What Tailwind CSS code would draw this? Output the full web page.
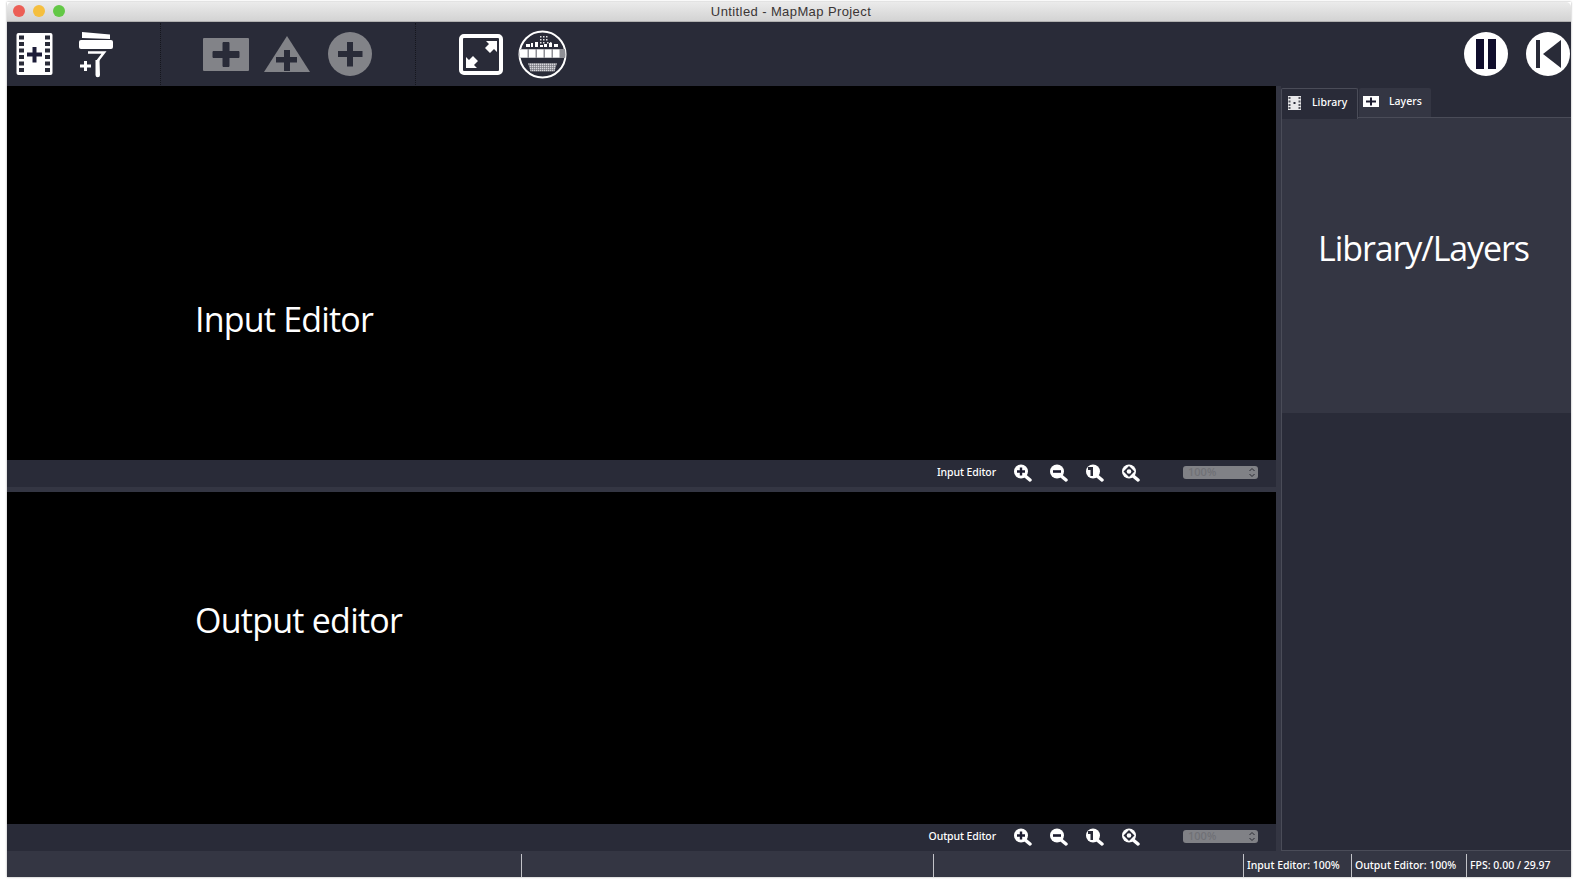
<!DOCTYPE html>
<html lang="en">
<head>
  <meta charset="UTF-8"/>
  <title>Untitled - MapMap Project</title>
  <script src="https://cdn.jsdelivr.net/npm/@tailwindcss/browser@4"></script>
</head>
<body class="bg-white font-['Noto_Sans',sans-serif] overflow-hidden">
<div class="w-[1573px] h-[883px] pl-[7px] pr-[2px] pt-[2px] pb-[6px]">
  <div class="flex flex-col h-full shadow-[0_0_2px_rgba(0,0,0,0.35)]">

    <!-- title bar -->
    <div class="relative h-[20px] shrink-0 flex items-center justify-center rounded-t-[5px] bg-gradient-to-b from-[#ebebeb] to-[#d3d3d3] border-b border-[#b0b0b0]">
      <div class="absolute left-[6px] top-[3px] flex gap-[8px]">
        <span class="w-3 h-3 rounded-full bg-[#ec5f56]"></span>
        <span class="w-3 h-3 rounded-full bg-[#f5bf3f]"></span>
        <span class="w-3 h-3 rounded-full bg-[#63c846]"></span>
      </div>
      <span class="text-[13px] leading-none text-[#3a3535] font-['Liberation_Sans',sans-serif] tracking-[0.4px] ml-[4px]">Untitled - MapMap Project</span>
    </div>

    <!-- toolbar -->
    <div class="h-[64px] shrink-0 bg-[#292b38] flex items-center relative">
      <svg class="ml-[9px] w-[37px] h-[44px]" viewBox="0 0 37 44">
        <rect x="0.5" y="1" width="36" height="42" rx="2" fill="#fff"/>
        <g fill="#292b38">
          <rect x="3" y="3.5" width="5" height="4"/><rect x="3" y="10" width="5" height="4"/><rect x="3" y="16.5" width="5" height="4"/><rect x="3" y="23" width="5" height="4"/><rect x="3" y="29.5" width="5" height="4"/><rect x="3" y="36" width="5" height="4"/>
          <rect x="29" y="3.5" width="5" height="4"/><rect x="29" y="10" width="5" height="4"/><rect x="29" y="16.5" width="5" height="4"/><rect x="29" y="23" width="5" height="4"/><rect x="29" y="29.5" width="5" height="4"/><rect x="29" y="36" width="5" height="4"/>
        </g>
        <path d="M16.500 15h4v5.500H26v4h-5.500v6h-4v-6H11v-4h5.500z" fill="#1c1c38"/>
      </svg>
      <!-- paint roller with plus -->
      <svg class="ml-[25px] w-[36px] h-[48px]" viewBox="0 0 36 48">
        <path d="M4 2l28 2.500V9L4 8z" fill="#fff"/>
        <rect x="1" y="10" width="34" height="9" rx="2" fill="#fff"/>
        <path d="M10 22.500h16L19.500 31" fill="none" stroke="#fff" stroke-width="2.500"/>
        <path d="M17.500 30h4l.5 15a2 2 0 0 1-4.500 0z" fill="#fff"/>
        <path d="M6 31h3v3.500h4v3H9V41H6v-3.500H2v-3h4z" fill="#fff"/>
      </svg>
      <div class="ml-[46px] w-px h-[62px] border-l border-dotted border-[#15161d]"></div>
      <svg class="ml-[42px] w-[46px] h-[33px]" viewBox="0 0 46 33">
        <rect width="46" height="33" rx="1" fill="#828388"/>
        <path d="M20 4.500h6v9h10v6H26v9h-6v-9H10v-6h10z" fill="#292b38" stroke="#292b38" stroke-linejoin="round"/>
      </svg>
      <svg class="ml-[15px] w-[46px] h-[36px]" viewBox="0 0 46 36">
        <path d="M23 0L46 36H0z" fill="#828388"/>
        <path d="M20 14h6v7h7v5.500h-7V35h-6v-8.500h-8V21h8z" fill="#292b38"/>
      </svg>
      <svg class="ml-[18px] w-[44px] h-[44px]" viewBox="0 0 44 44">
        <circle cx="22" cy="22" r="22" fill="#828388"/>
        <path d="M19 10h6v9h9.500v6H25v9.500h-6V25H10v-6h9z" fill="#292b38"/>
      </svg>
      <div class="ml-[43px] w-px h-[62px] border-l border-dotted border-[#15161d]"></div>
      <svg class="ml-[43px] w-[44px] h-[41px]" viewBox="0 0 44 41">
        <rect x="2" y="2" width="40" height="37" rx="3" fill="none" stroke="#fff" stroke-width="4"/>
        <path d="M27 7h11v11l-3-3-4 4-5-5 4-4z" fill="#fff"/>
        <path d="M7 34V23l3 3 4-4 5 5-4 4 3 3z" fill="#fff"/>
      </svg>
      <!-- keyboard circle -->
      <svg class="ml-[15px] w-[49px] h-[49px]" viewBox="0 0 49 49">
        <defs>
          <clipPath id="kb"><circle cx="24.500" cy="24.500" r="23"/></clipPath>
          <pattern id="hatch" width="2" height="2" patternUnits="userSpaceOnUse"><rect width="2" height="2" fill="#6d6e76"/><rect width="1.400" height="1.400" fill="#d8d8dc"/></pattern>
        </defs>
        <circle cx="24.500" cy="24.500" r="23" fill="#292b38" stroke="#fff" stroke-width="2"/>
        <g clip-path="url(#kb)" fill="#fff">
          <path d="M22 6h1.500v1.500H22zM25 6h1.500v1.500H25zM28 6h1.500v1.500H28zM22 9h1.500v1.500H22zM25 9h1.500v1.500H25zM28 9h1.500v1.500H28zM22 12h1.500v1.500H22zM25 12h1.500v1.500H25zM29 12h1.500v1.500H29zM32 12h1.500v1.500H32z" opacity=".85"/>
          <path d="M8 14h4v3H8zM13 13h2v4h-2zM17 12h3v5h-3zM22 15h3v2h-3zM26 14h3v3h-3zM31 13h3v4h-3zM36 14h4v3h-4z"/>
          <rect x="0" y="19" width="49" height="9" fill="#8f9096"/>
          <path d="M2 19.500h7.500v8H2zM11 19.500h6.500v8H11zM19 19.500h6.500v8H19zM27 19.500h6.500v8H27zM35 19.500h6.500v8H35z"/>
          <path d="M10 33h29l-2.500 8.500h-24z" fill="url(#hatch)"/>
        </g>
      </svg>
      <div class="ml-auto flex items-center gap-[18px] pr-[1px]">
        <svg class="w-[44px] h-[44px]" viewBox="0 0 44 44">
          <circle cx="22" cy="22" r="22" fill="#fff"/>
          <rect x="12" y="7" width="8" height="30" fill="#100e2c"/><rect x="24" y="7" width="8" height="30" fill="#100e2c"/>
        </svg>
        <svg class="w-[44px] h-[44px]" viewBox="0 0 44 44">
          <circle cx="22" cy="22" r="22" fill="#fff"/>
          <rect x="10" y="8" width="4" height="28" fill="#292b38"/><path d="M35 8v28L17 22z" fill="#292b38"/>
        </svg>
      </div>
    </div>

    <!-- main -->
    <div class="flex flex-1 min-h-0 bg-[#343643]">
      <div class="w-[1269px] shrink-0 flex flex-col">
        <div class="h-[374px] bg-black flex items-center pl-[188px] text-white text-[34px] leading-none font-['Open_Sans',sans-serif]"><span class="relative top-[46px] tracking-[-0.8px]">Input Editor</span></div>
        <div class="h-[27px] bg-[#292b38] flex items-center justify-end text-white text-[10.5px] font-medium pr-[18px] pb-[2px]">
          <span class="mr-[17px] tracking-[-0.1px]">Input Editor</span>
          <div class="flex gap-[17px] mr-[43px]">
            <svg class="w-[19px] h-[18px]" viewBox="0 0 19 18"><path d="M11 11l6 5" stroke="#fff" stroke-width="3.500" stroke-linecap="round"/><circle cx="8" cy="7.500" r="7" fill="#fff"/><path d="M6.800 3.500h2.400v2.800H12v2.400H9.200v2.800H6.800V8.700H4V6.300h2.800z" fill="#1c1c30"/></svg>
            <svg class="w-[19px] h-[18px]" viewBox="0 0 19 18"><path d="M11 11l6 5" stroke="#fff" stroke-width="3.500" stroke-linecap="round"/><circle cx="8" cy="7.500" r="7" fill="#fff"/><rect x="4" y="6.200" width="8" height="2.600" fill="#1c1c30"/></svg>
            <svg class="w-[19px] h-[18px]" viewBox="0 0 19 18"><path d="M11 11l6 5" stroke="#fff" stroke-width="3.500" stroke-linecap="round"/><circle cx="8" cy="7.500" r="7" fill="#fff"/><path d="M3 3h5v9H5.500V6H3z" fill="#292b38"/></svg>
            <svg class="w-[19px] h-[18px]" viewBox="0 0 19 18"><path d="M11 11l6 5" stroke="#fff" stroke-width="3.500" stroke-linecap="round"/><circle cx="8" cy="7.500" r="7" fill="#fff"/><path d="M8 2l5.500 5.500L8 13 2.500 7.500z" fill="#292b38"/><circle cx="8" cy="7.500" r="2.300" fill="#fff"/></svg>
          </div>
          <div class="w-[75px] h-[13px] rounded-[3px] bg-[#808186] flex items-center justify-between pl-[5px] pr-[2px] text-[11px] text-[#6f7075]">
            <span>100%</span>
            <svg class="w-[8px] h-[11px]" viewBox="0 0 8 11"><path d="M1.500 4L4 1.500 6.500 4M1.500 7L4 9.500 6.500 7" fill="none" stroke="#2a2b34" stroke-width="1"/></svg>
          </div>
        </div>
        <div class="h-[5px] shrink-0"></div>
        <div class="h-[332px] bg-black flex items-center pl-[188px] text-white text-[34px] leading-none font-['Open_Sans',sans-serif]"><span class="relative top-[-38px] tracking-[-0.75px]">Output editor</span></div>
        <div class="h-[27px] bg-[#292b38] flex items-center justify-end text-white text-[10.5px] font-medium pr-[18px] pb-[2px]">
          <span class="mr-[17px] tracking-[-0.1px]">Output Editor</span>
          <div class="flex gap-[17px] mr-[43px]">
            <svg class="w-[19px] h-[18px]" viewBox="0 0 19 18"><path d="M11 11l6 5" stroke="#fff" stroke-width="3.500" stroke-linecap="round"/><circle cx="8" cy="7.500" r="7" fill="#fff"/><path d="M6.800 3.500h2.400v2.800H12v2.400H9.200v2.800H6.800V8.700H4V6.300h2.800z" fill="#1c1c30"/></svg>
            <svg class="w-[19px] h-[18px]" viewBox="0 0 19 18"><path d="M11 11l6 5" stroke="#fff" stroke-width="3.500" stroke-linecap="round"/><circle cx="8" cy="7.500" r="7" fill="#fff"/><rect x="4" y="6.200" width="8" height="2.600" fill="#1c1c30"/></svg>
            <svg class="w-[19px] h-[18px]" viewBox="0 0 19 18"><path d="M11 11l6 5" stroke="#fff" stroke-width="3.500" stroke-linecap="round"/><circle cx="8" cy="7.500" r="7" fill="#fff"/><path d="M3 3h5v9H5.500V6H3z" fill="#292b38"/></svg>
            <svg class="w-[19px] h-[18px]" viewBox="0 0 19 18"><path d="M11 11l6 5" stroke="#fff" stroke-width="3.500" stroke-linecap="round"/><circle cx="8" cy="7.500" r="7" fill="#fff"/><path d="M8 2l5.500 5.500L8 13 2.500 7.500z" fill="#292b38"/><circle cx="8" cy="7.500" r="2.300" fill="#fff"/></svg>
          </div>
          <div class="w-[75px] h-[13px] rounded-[3px] bg-[#808186] flex items-center justify-between pl-[5px] pr-[2px] text-[11px] text-[#6f7075]">
            <span>100%</span>
            <svg class="w-[8px] h-[11px]" viewBox="0 0 8 11"><path d="M1.500 4L4 1.500 6.500 4M1.500 7L4 9.500 6.500 7" fill="none" stroke="#2a2b34" stroke-width="1"/></svg>
          </div>
        </div>
      </div>

      <!-- side dock -->
      <div class="w-[5px] shrink-0 bg-[#343643]"></div>
      <div class="flex-1 flex flex-col bg-[#292b38] min-w-0">
        <div class="h-[32px] shrink-0 flex items-end text-[10.5px] font-medium text-white relative">
          <div class="w-[77px] h-[31px] bg-[#292b38] border-t border-r border-l border-[#4a4c58] rounded-t-[2px] relative z-10 flex items-center pl-[6px] pb-[3px] mb-[-1px]">
            <svg class="w-[13px] h-[14px]" viewBox="0 0 13 14"><rect width="13" height="14" fill="#e8e8ea"/><path d="M0.500 1h2v2h-2zM0.500 4.500h2v2h-2zM0.500 8h2v2h-2zM0.500 11h2v2h-2zM10.500 1h2v2h-2zM10.500 4.500h2v2h-2zM10.500 8h2v2h-2zM10.500 11h2v2h-2z" fill="#55565f"/><rect x="5.500" y="6" width="2" height="2" fill="#292b38"/></svg>
            <span class="ml-[11px]">Library</span>
          </div>
          <div class="w-[72px] h-[30px] bg-[#343643] rounded-t-[2px] ml-[1px] flex items-center pl-[4px] pb-[3px]">
            <svg class="w-[16px] h-[11px]" viewBox="0 0 16 11"><rect width="16" height="11" fill="#fff"/><path d="M7 1.500h2v3h4v2H9v3H7v-3H3v-2h4z" fill="#1c1c30"/></svg>
            <span class="ml-[10px]">Layers</span>
          </div>
          <div class="absolute left-0 right-0 bottom-0 h-px bg-[#4a4c58]"></div>
        </div>
        <div class="h-[295px] shrink-0 bg-[#343643] border-l border-[#4a4c58] flex items-start justify-center text-white text-[34px] leading-none font-['Open_Sans',sans-serif] pt-[113px]"><span class="tracking-[-1.1px] relative left-[-3px]">Library/Layers</span></div>
        <div class="flex-1 border-l border-[#4a4c58] border-b"></div>
      </div>
    </div>

    <!-- status bar -->
    <div class="h-[26px] shrink-0 bg-[#343643] flex items-center text-[10.5px] font-medium text-white">
      <div class="w-[515px] self-end h-[23px] border-r border-[#c2c3c8]"></div>
      <div class="w-[412px] self-end h-[23px] border-r border-[#c2c3c8]"></div>
      <div class="w-[310px] self-end h-[23px] border-r border-[#c2c3c8]"></div>
      <div class="w-[108px] self-end h-[23px] border-r border-[#c2c3c8] pl-[3px] flex items-center">Input Editor: 100%</div>
      <div class="w-[115px] self-end h-[23px] border-r border-[#c2c3c8] pl-[3px] flex items-center">Output Editor: 100%</div>
      <div class="pl-[3px] self-end h-[23px] flex items-center">FPS: 0.00 / 29.97</div>
    </div>
  </div>
</div>
</body>
</html>
